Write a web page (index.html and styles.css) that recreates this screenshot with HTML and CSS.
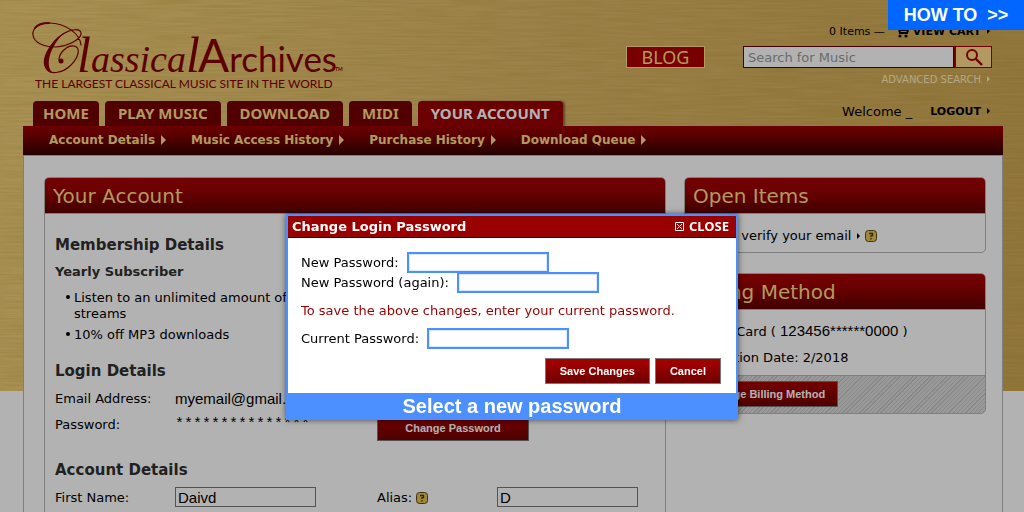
FILE: index.html
```html
<!DOCTYPE html>
<html lang="en">
<head>
    <meta charset="UTF-8">
    <meta name="viewport" content="width=device-width, initial-scale=1.0">
    <title>Classical Archives - Your Account</title>
    <link rel="stylesheet" href="styles.css">
</head>
<body>

    <!-- brushed gold backdrop -->
    <svg class="backdrop" aria-hidden="true">
        <filter id="brushed" x="0" y="0" width="100%" height="100%">
            <feTurbulence type="fractalNoise" baseFrequency="0.02 0.5" numOctaves="2" seed="4"/>
            <feColorMatrix values="0 0 0 0 0.3  0 0 0 0 0.2  0 0 0 0 0  0.3 0 0 0 -0.08"/>
        </filter>
        <rect width="100%" height="100%" filter="url(#brushed)"/>
    </svg>

    <div class="page">
        <header class="header">
            <div class="header-top">
                <a href="#" class="logo">
                    <svg width="312" height="72" viewBox="0 0 312 72" role="img" aria-label="Classical Archives">
                        <g fill="none" stroke="#840000" stroke-linecap="round">
                            <path d="M49 23C48 12 34 1 17 1C6 1 0 7 1 13C2 21 12 25 24 25C38 24 50 16 49 11C48 6 39 7 31 12" stroke-width="1.2"/>
                            <path d="M3 6C6 2 11 1 17 1" stroke-width="2"/>
                            <path d="M31 12C18 20 10 38 14 46C17 53 30 52 39 43C47 35 49 25 42 24C35 23 27 31 27 38" stroke-width="1.2"/>
                        </g>
                        <path d="M31 12C20 18 8 36 13 45C15 49 18 50 20 50C13 43 18 25 31 12Z" fill="#840000"/>
                        <circle cx="29" cy="39" r="2.5" fill="#840000"/>
                        <text class="logo-script" x="45" y="50"><tspan class="tall">l</tspan>assica<tspan class="tall">l</tspan></text>
                        <text class="logo-sans" x="166" y="50"><tspan class="cap">A</tspan>rchives</text>
                        <text class="logo-tm" x="303" y="49">TM</text>
                        <text class="logo-tagline" x="3" y="66">THE LARGEST CLASSICAL MUSIC SITE IN THE WORLD</text>
                    </svg>
                </a>

                <a href="#" class="blog">BLOG</a>

                <div class="tools">
                    <div class="cart">
                        <span>0 Items &mdash;</span>
                        <svg width="14" height="14" viewBox="0 0 14 14" aria-hidden="true">
                            <path d="M0 1h3l2 8h7l2-6H4M5 6h8" fill="none" stroke="#000" stroke-width="2"/>
                            <circle cx="5" cy="12" r="1.6"/><circle cx="11" cy="12" r="1.6"/>
                        </svg>
                        <a href="#">VIEW CART</a><i class="arrow small"></i>
                    </div>
                    <form class="search">
                        <input type="text" placeholder="Search for Music" aria-label="Search for Music">
                        <button type="button" aria-label="Search">
                            <svg width="18" height="18" viewBox="0 0 18 18"><circle cx="7" cy="7" r="5" fill="none" stroke="#a80000" stroke-width="2"/><path d="M10.500 10.500L17 17" stroke="#a80000" stroke-width="2.400"/></svg>
                        </button>
                    </form>
                    <a href="#" class="advanced">ADVANCED SEARCH<i class="arrow small"></i></a>
                </div>
            </div>

            <div class="tab-row">
                <nav class="tabs">
                    <a href="#" class="narrow">HOME</a>
                    <a href="#">PLAY MUSIC</a>
                    <a href="#">DOWNLOAD</a>
                    <a href="#">MIDI</a>
                    <a href="#" class="active">YOUR ACCOUNT</a>
                </nav>
                <div class="welcome">
                    <span>Welcome _</span>
                    <a href="#">LOGOUT<i class="arrow small"></i></a>
                </div>
            </div>
        </header>

        <nav class="subnav">
            <a href="#">Account Details<i class="arrow"></i></a>
            <a href="#">Music Access History<i class="arrow"></i></a>
            <a href="#">Purchase History<i class="arrow"></i></a>
            <a href="#">Download Queue<i class="arrow"></i></a>
        </nav>

        <main class="content">
            <section class="panel account">
                <h1>Your Account</h1>
                <div class="account-body">
                    <h2>Membership Details</h2>
                    <h3>Yearly Subscriber</h3>
                    <ul>
                        <li>Listen to an unlimited amount of<br>streams</li>
                        <li>10% off MP3 downloads</li>
                    </ul>

                    <h2>Login Details</h2>
                    <div class="fields">
                        <span>Email Address:</span>
                        <span class="plain wide">myemail@gmail.com</span>
                        <span>Password:</span>
                        <span class="stars">***************</span>
                        <button type="button" class="btn change">Change Password</button>
                    </div>

                    <h2>Account Details</h2>
                    <div class="fields">
                        <label for="first">First Name:</label>
                        <input type="text" id="first" value="Daivd">
                        <label for="alias">Alias: <svg class="help" width="12" height="12" viewBox="0 0 12 12"><use href="#help-icon"/></svg></label>
                        <input type="text" id="alias" value="D">
                    </div>
                </div>
            </section>

            <aside class="side">
                <section class="panel">
                    <h1>Open Items</h1>
                    <p class="open-item"><a href="#">Please verify your email</a><i class="arrow small"></i>
                        <svg class="help" width="12" height="12" viewBox="0 0 12 12">
                            <g id="help-icon">
                                <rect x="0.500" y="0.500" width="11" height="11" rx="3" fill="#e3c355" stroke="#5c4a10"/>
                                <path d="M4 3.500h3.500v2.200H6v1.300M6 8v1.400" fill="none" stroke="#4a3b0c" stroke-width="1.300"/>
                            </g>
                        </svg>
                    </p>
                </section>

                <section class="panel">
                    <h1>Billing Method</h1>
                    <div class="billing">
                        <p>Credit Card ( <span class="plain">123456******0000</span> )</p>
                        <p>Expiration Date: 2/2018</p>
                    </div>
                    <div class="panel-footer">
                        <button type="button" class="btn">Change Billing Method</button>
                    </div>
                </section>
            </aside>
        </main>
    </div>

    <div class="overlay"></div>

    <div class="how-to">HOW TO&nbsp; &gt;&gt;</div>

    <div class="dialog" role="dialog" aria-labelledby="dialog-title">
        <div class="dialog-head">
            <span id="dialog-title">Change Login Password</span>
            <button type="button" class="close">
                <svg width="9" height="9" viewBox="0 0 9 9"><path d="M0.500 0.500h8v8h-8zM2 2l5 5M7 2l-5 5" fill="none" stroke="#fff"/></svg>
                CLOSE
            </button>
        </div>
        <form class="dialog-body">
            <div class="row"><label for="new1">New Password:</label><input type="password" id="new1"></div>
            <div class="row"><label for="new2">New Password (again):</label><input type="password" id="new2"></div>
            <p>To save the above changes, enter your current password.</p>
            <div class="row"><label for="current">Current Password:</label><input type="password" id="current"></div>
            <div class="actions">
                <button type="button" class="btn">Save Changes</button>
                <button type="button" class="btn">Cancel</button>
            </div>
        </form>
        <div class="dialog-tip">Select a new password</div>
    </div>

</body>
</html>
```
FILE: styles.css
```css
* { box-sizing: border-box; }

body {
    margin: 0;
    height: 100vh;
    overflow: hidden;
    background: #fff;
    color: #000;
    font-family: Verdana, "DejaVu Sans", sans-serif;
    font-size: 13px;
}

h1, h2, h3, p, ul { margin: 0; padding: 0; }
a { color: inherit; text-decoration: none; }

.backdrop {
    position: absolute;
    top: 0;
    left: 0;
    width: 100%;
    height: 391px;
    background: linear-gradient(100deg, #f4d27c, #e0ba6a 50%, #d2aa58);
}

.page { position: relative; margin: 0 21px 0 23px; }

.arrow {
    display: inline-block;
    margin-left: 6px;
    border-left: 5px solid currentColor;
    border-top: 5px solid transparent;
    border-bottom: 5px solid transparent;
}
.arrow.small { border-width: 3px; border-right: 0; margin-left: 6px; vertical-align: 1px; }

/* header */
.header-top { display: flex; align-items: flex-start; height: 101px; padding: 22px 11px 0 9px; }
.logo { flex: 1; }
.logo svg { display: block; fill: #840000; overflow: visible; }
.logo-script { font: italic 38px "Liberation Serif", serif; }
.logo-script .tall { font-size: 50px; }
.logo-sans { font: 35px Lato, sans-serif; }
.logo-sans .cap { font-size: 46px; }
.logo-tm { font: bold 5px Lato, sans-serif; }
.logo-tagline { font: 12px Lato, sans-serif; }

.blog {
    width: 79px;
    height: 22px;
    margin: 24px 38px 0 0;
    border: 1px solid #ffdc89;
    background: #ae0000;
    color: #ffdc89;
    font: 18px/20px "Noto Sans", sans-serif;
    text-align: center;
}

.tools { width: 249px; }
.cart { display: flex; align-items: center; justify-content: flex-end; height: 18px; padding-right: 2px; font-size: 11px; }
.cart svg { margin: 0 4px 0 10px; }
.cart a { font-weight: bold; }
.search { display: flex; height: 22px; margin-top: 6px; }
.search input {
    flex: 1;
    min-width: 0;
    border: 1px solid #600000;
    padding: 0 4px;
    background: #fff;
    font: 13px "DejaVu Sans", sans-serif;
}
.search input::placeholder { color: #999; opacity: 1; }
.search button { width: 38px; border: 1px solid #a80000; border-left-width: 2px; padding: 1px 0 0; background: #fedb88; }
.advanced { display: block; margin-top: 5px; padding-right: 2px; color: #fff0c0; font-size: 10px; text-align: right; line-height: 14px; }

.tab-row { display: flex; justify-content: space-between; height: 25px; padding: 0 13px 0 10px; }
.tabs { display: flex; gap: 6px; }
.tabs a {
    padding: 0 13px;
    border-radius: 4px 4px 0 0;
    background: #750000;
    color: #fedb88;
    font: bold 15px/25px "Noto Sans", sans-serif;
}
.tabs a.narrow { padding: 0 10px; }
.tabs a.active { background: #980000; color: #fff; box-shadow: 2px 0 2px rgba(0, 0, 0, 0.4); }
.welcome { display: flex; gap: 18px; line-height: 22px; }
.welcome a { font-size: 11px; font-weight: bold; }

.subnav {
    position: relative;
    display: flex;
    gap: 25px;
    height: 29px;
    padding-left: 26px;
    background: linear-gradient(#9a0000, #880000 25%, #350000);
    color: #fedb88;
    font-size: 12px;
    font-weight: bold;
    line-height: 28px;
}
.subnav .arrow { vertical-align: -1px; }

/* panels */
.content {
    display: flex;
    align-items: flex-start;
    gap: 18px;
    padding: 21px 16px 40px 20px;
    border: 1px solid #b7b7b7;
    background: #fff;
}
.panel { border: 1px solid #b7b7b7; border-radius: 5px; overflow: hidden; background: #fff; }
.panel h1 {
    height: 36px;
    padding-left: 8px;
    border-bottom: 1px solid #b7b7b7;
    background: linear-gradient(#a80000, #960000 40%, #600000);
    color: #fedb88;
    font-size: 20px;
    font-weight: normal;
    line-height: 37px;
}
.account { flex: 1; }
.account-body { padding: 21px 10px; }
.account h2 { color: #303030; font-size: 15px; line-height: 20px; }
.account h3 { margin-top: 8px; color: #303030; font-size: 13px; line-height: 18px; }
.account ul { margin: 9px 0 18px; list-style: none; }
.account li { position: relative; margin-bottom: 5px; padding-left: 19px; line-height: 16px; }
.account li::before {
    content: "";
    position: absolute;
    top: 5px;
    left: 11px;
    width: 4px;
    height: 4px;
    border-radius: 50%;
    background: #000;
}

.fields {
    display: grid;
    grid-template-columns: 120px 202px 120px 1fr;
    grid-auto-rows: 26px;
    align-items: center;
    margin: 4px 0 23px;
}
.fields input {
    width: 141px;
    height: 20px;
    border: 1px solid #777;
    padding: 0 2px;
    font: 15px "Liberation Sans", sans-serif;
}
.plain { font: 15px "Liberation Sans", sans-serif; }
.wide { grid-column: span 3; }
.stars { font: 15px "Liberation Mono", monospace; }
.change { width: 152px; margin-top: 8px; }
.help { vertical-align: -2px; }

.btn {
    height: 26px;
    padding: 0 14px;
    border: 1px solid #777;
    background: linear-gradient(#a80000, #700000);
    color: #fff;
    font: bold 11px "Liberation Sans", sans-serif;
    white-space: nowrap;
}

.side { display: grid; gap: 20px; width: 302px; }
.open-item { padding: 14px 8px 8px 10px; line-height: 16px; }
.billing { padding: 9px 8px 4px; line-height: 26px; }
.panel-footer {
    padding: 5px 8px 6px;
    border-top: 1px solid #b7b7b7;
    background: repeating-linear-gradient(135deg, #dcdcdc 0 2px, #c4c4c4 2px 3px);
}
.panel-footer .btn { padding: 0 12px; }

.overlay { position: fixed; inset: 0; background: rgba(0, 0, 0, 0.3); }

.how-to {
    position: fixed;
    top: 0;
    right: 0;
    width: 136px;
    background: #06f;
    color: #fff;
    font: bold 18px/30px "Liberation Sans", sans-serif;
    text-align: center;
}

/* change password dialog */
.dialog {
    position: fixed;
    top: 214px;
    left: calc(50% - 226px);
    width: 452px;
    border: 2px solid #4c90ff;
    background: #fff;
    box-shadow: 0 0 6px rgba(0, 0, 0, 0.6);
}
.dialog-head {
    display: flex;
    justify-content: space-between;
    height: 22px;
    padding: 0 7px 0 4px;
    border-bottom: 1px solid #000;
    background: #900;
    color: #fff;
    font-weight: bold;
    line-height: 22px;
}
.close { height: 19px; border: 0; padding: 0; background: none; color: #fff; font: bold 13px/18px "Noto Sans", sans-serif; }
.close svg { margin-right: 2px; }
.dialog-body { padding: 14px 15px 9px 13px; }
.row { display: flex; align-items: center; gap: 8px; height: 20px; }
.row input { width: 142px; height: 21px; border: 2px solid #4c90ff; padding: 0 2px; background: #fff; box-shadow: inset 0 0 0 1px #dbe8ff; }
.dialog-body p { margin: 10px 0 8px; color: #900; line-height: 18px; }
.actions { display: flex; justify-content: flex-end; gap: 5px; margin-top: 10px; }
.dialog-tip { height: 25px; background: #4c90ff; color: #fff; font: bold 20px/27px "Liberation Sans", sans-serif; text-align: center; }
```
